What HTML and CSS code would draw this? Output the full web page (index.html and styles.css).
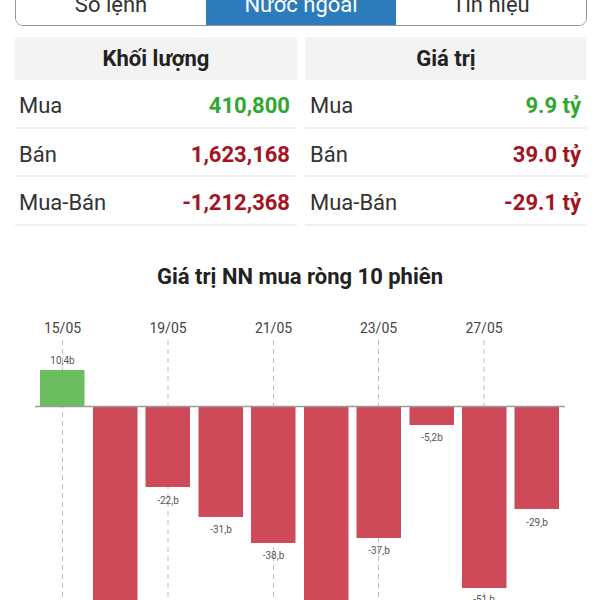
FILE: index.html
```html
<!DOCTYPE html>
<html lang="vi">
<head>
    <meta charset="UTF-8">
    <meta name="viewport" content="width=device-width, initial-scale=1.0">
    <title>Nước ngoài</title>
    <link rel="stylesheet" href="styles.css">
</head>
<body>
    <div class="page">
        <div class="tabs">
            <div class="tab">Số lệnh</div>
            <div class="tab active">Nước ngoài</div>
            <div class="tab">Tín hiệu</div>
        </div>

        <div class="stats">
            <div class="stat-col">
                <div class="col-head">Khối lượng</div>
                <div class="row"><span class="label">Mua</span><span class="value up">410,800</span></div>
                <div class="row"><span class="label">Bán</span><span class="value down">1,623,168</span></div>
                <div class="row"><span class="label">Mua-Bán</span><span class="value down">-1,212,368</span></div>
            </div>
            <div class="stat-col">
                <div class="col-head">Giá trị</div>
                <div class="row"><span class="label">Mua</span><span class="value up">9.9 tỷ</span></div>
                <div class="row"><span class="label">Bán</span><span class="value down">39.0 tỷ</span></div>
                <div class="row"><span class="label">Mua-Bán</span><span class="value down">-29.1 tỷ</span></div>
            </div>
        </div>
    </div>

    <div class="chart">
        <h2 class="chart-title">Giá trị NN mua ròng 10 phiên</h2>
        <svg class="chart-svg" width="600" height="300" viewBox="0 0 600 300">
            <!-- grid lines -->
            <g class="grid">
                <line x1="62.5" y1="40" x2="62.5" y2="300"/>
                <line x1="168" y1="40" x2="168" y2="300"/>
                <line x1="273.5" y1="40" x2="273.5" y2="300"/>
                <line x1="378.5" y1="40" x2="378.5" y2="300"/>
                <line x1="484" y1="40" x2="484" y2="300"/>
            </g>
            <g class="dates">
                <text x="62.5" y="33">15/05</text>
                <text x="168" y="33">19/05</text>
                <text x="273.5" y="33">21/05</text>
                <text x="378.5" y="33">23/05</text>
                <text x="484" y="33">27/05</text>
            </g>

            <!-- bars -->
            <rect class="bar-up" x="40" y="70" width="44.5" height="36.5"/>
            <g class="bar-down">
                <rect x="93" y="106.5" width="44.5" height="200"/>
                <rect x="145.5" y="106.5" width="44.5" height="80.5"/>
                <rect x="198.5" y="106.5" width="44.5" height="110.5"/>
                <rect x="251" y="106.5" width="44.5" height="136.5"/>
                <rect x="304" y="106.5" width="44.5" height="200"/>
                <rect x="356.5" y="106.5" width="44.5" height="131.5"/>
                <rect x="409.5" y="106.5" width="44.5" height="18.5"/>
                <rect x="462" y="106.5" width="44.5" height="181.5"/>
                <rect x="514.5" y="106.5" width="44.5" height="102.5"/>
            </g>
            <line class="zero" x1="35" y1="106.5" x2="565" y2="106.5"/>

            <g class="bar-labels">
                <text x="62.5" y="63.5">10,4b</text>
                <text x="168" y="203.5">-22,b</text>
                <text x="221" y="232.5">-31,b</text>
                <text x="273.5" y="258.5">-38,b</text>
                <text x="379" y="253.5">-37,b</text>
                <text x="432" y="140.5">-5,2b</text>
                <text x="484" y="303">-51,b</text>
                <text x="537" y="225.5">-29,b</text>
            </g>
        </svg>
    </div>
</body>
</html>
```

FILE: styles.css
```css
body {
    margin: 0;
    font-family: Roboto, "Noto Sans", sans-serif;
    color: #2b2b2b;
    background: #fff;
    overflow: hidden;
}

.page {
    padding: 0 13px 0 15px;
}

.tabs {
    display: grid;
    grid-template-columns: 1fr 1fr 1fr;
    height: 44px;
    margin-top: -18px;
    border: 1.5px solid #8a98a3;
    border-radius: 8px;
    overflow: hidden;
    box-sizing: border-box;
}

.tab {
    display: flex;
    align-items: center;
    justify-content: center;
    font-size: 22px;
    color: #333;
    background: #fff;
}

.tab.active {
    background: #2c7cbd;
    color: #fff;
}

.stats {
    display: grid;
    grid-template-columns: 1fr 1fr;
    gap: 8px;
    margin-top: 11px;
}

.col-head {
    height: 43px;
    background: #f3f3f3;
    display: flex;
    align-items: center;
    justify-content: center;
    font-size: 22px;
    font-weight: 700;
    color: #222;
}

.row {
    height: 48.5px;
    box-sizing: border-box;
    display: flex;
    align-items: center;
    justify-content: space-between;
    padding: 5px 7px 0 4px;
    border-bottom: 2px solid #efefef;
    font-size: 22px;
}

.stat-col + .stat-col .row {
    padding-left: 5px;
    padding-right: 6px;
}

.label {
    color: #333;
}

.value {
    font-weight: 700;
}

.value.up {
    color: #30a830;
}

.value.down {
    color: #a5131f;
}

.chart-title {
    margin: 38px 0 0;
    text-align: center;
    font-size: 22px;
    line-height: 26px;
    font-weight: 700;
    color: #222;
}

.chart-svg {
    display: block;
    margin-top: 10px;
}

.grid line {
    stroke: #bdbdbd;
    stroke-width: 1;
    stroke-dasharray: 5 4;
}

.dates text {
    font-size: 14px;
    fill: #444;
    text-anchor: middle;
}

.bar-up {
    fill: #6bbd5f;
}

.bar-down rect {
    fill: #cf4a59;
}

.zero {
    stroke: #9a9a9a;
    stroke-width: 1.5;
}

.bar-labels text {
    font-size: 10px;
    fill: #555;
    text-anchor: middle;
}
```
